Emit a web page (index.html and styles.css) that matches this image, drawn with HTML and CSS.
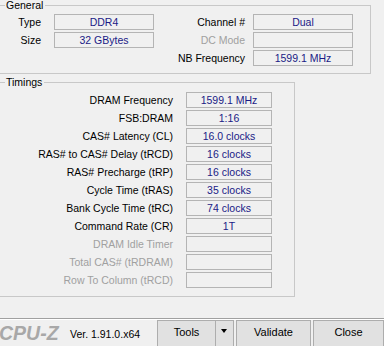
FILE: index.html
```html
<!DOCTYPE html>
<html lang="en">
<head>
<meta charset="utf-8"/>
<title>CPU-Z Memory</title>
<link rel="stylesheet" href="styles.css">
</head>
<body>
<fieldset class="group general">
  <legend>General</legend>
  <div class="gen-grid">
    <span class="lbl">Type</span><span class="val">DDR4</span>
    <span class="lbl">Channel #</span><span class="val">Dual</span>
    <span class="lbl">Size</span><span class="val">32 GBytes</span>
    <span class="lbl dis">DC Mode</span><span class="val"></span>
    <span></span><span></span>
    <span class="lbl">NB Frequency</span><span class="val">1599.1 MHz</span>
  </div>
</fieldset>
<fieldset class="group timings">
  <legend>Timings</legend>
  <div class="tim-grid">
    <span class="lbl">DRAM Frequency</span><span class="val">1599.1 MHz</span>
    <span class="lbl">FSB:DRAM</span><span class="val">1:16</span>
    <span class="lbl">CAS# Latency (CL)</span><span class="val">16.0 clocks</span>
    <span class="lbl">RAS# to CAS# Delay (tRCD)</span><span class="val">16 clocks</span>
    <span class="lbl">RAS# Precharge (tRP)</span><span class="val">16 clocks</span>
    <span class="lbl">Cycle Time (tRAS)</span><span class="val">35 clocks</span>
    <span class="lbl">Bank Cycle Time (tRC)</span><span class="val">74 clocks</span>
    <span class="lbl">Command Rate (CR)</span><span class="val">1T</span>
    <span class="lbl dis">DRAM Idle Timer</span><span class="val"></span>
    <span class="lbl dis">Total CAS# (tRDRAM)</span><span class="val"></span>
    <span class="lbl dis">Row To Column (tRCD)</span><span class="val"></span>
  </div>
</fieldset>
<div class="bottom">
  <span class="logo">CPU-Z</span>
  <span class="ver">Ver. 1.91.0.x64</span>
  <div class="btn split"><span class="split-main">Tools</span><span class="split-arrow"></span></div>
  <div class="btn validate">Validate</div>
  <div class="btn close">Close</div>
</div>
</body>
</html>
```
FILE: styles.css
```css
body {
  margin: 0;
  width: 384px;
  height: 346px;
  overflow: hidden;
  background: #f0f0f0;
  color: #000;
  font-family: "Liberation Sans", Arial, sans-serif;
  font-size: 10.5px;
}
.group {
  margin: 0 0 0 -3px;
  padding: 3px 0 0 7px;
  border: 1px solid #c8c8c8;
  box-sizing: border-box;
  min-width: 0;
}
.group legend {
  padding: 0 2px 0 1px;
  line-height: 11px;
  height: 11px;
}
.general { width: 374px; height: 74px; }
.timings { width: 298px; height: 220px; margin-top: 3px; padding-top: 4px; }

.gen-grid {
  display: grid;
  grid-template-columns: 49px 100px 99px 100px;
  grid-auto-rows: 16px;
  row-gap: 2px;
}
.tim-grid {
  display: grid;
  grid-template-columns: 181px 86px;
  grid-auto-rows: 16px;
  row-gap: 2px;
}
.lbl {
  text-align: right;
  padding-right: 13px;
  line-height: 16px;
  white-space: nowrap;
}
.gen-grid .lbl:nth-child(4n+3) { padding-right: 8px; }
.lbl.dis { color: #a0a0a0; }
.val {
  border: 1px solid #b4b4b4;
  box-sizing: border-box;
  text-align: center;
  line-height: 14px;
  color: #1a1a86;
}
.gen-grid > span:empty:not(.val) { border: none; }

.bottom {
  margin-top: 21px;
  border-top: 1px solid #a0a0a0;
  box-shadow: inset 0 1px 0 #fff;
  display: flex;
  align-items: flex-start;
  padding-top: 1px;
}
.logo {
  font-weight: bold;
  font-style: italic;
  font-size: 19.5px;
  color: #a8a8a8;
  margin: 3px 0 0 -1px;
  width: 71px;
  line-height: 20px;
}
.ver {
  width: 87px;
  margin-top: 8px;
  font-size: 10.5px;
}
.btn {
  height: 28px;
  box-sizing: border-box;
  border: 1px solid #adadad;
  background: #e1e1e1;
  text-align: center;
  line-height: 22px;
  font-size: 11px;
}
.split { width: 77px; display: flex; }
.split-main { width: 57px; border-right: 1px solid #adadad; }
.split-arrow { flex: 1; position: relative; }
.split-arrow::after {
  content: "";
  position: absolute;
  left: 5px;
  top: 8px;
  border-left: 3px solid transparent;
  border-right: 3px solid transparent;
  border-top: 4px solid #000;
}
.validate { width: 75px; margin-left: 2px; }
.close { width: 71px; margin-left: 2px; }
```
